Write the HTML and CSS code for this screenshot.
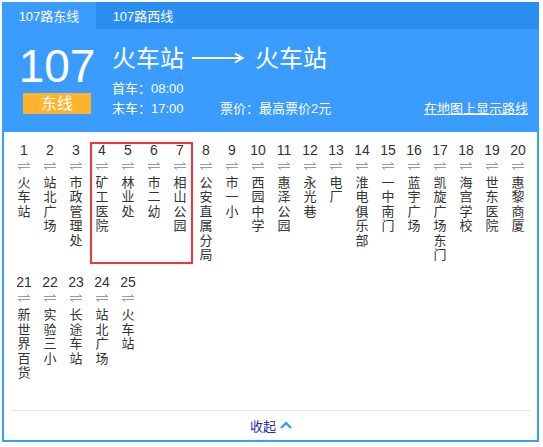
FILE: index.html
```html
<!DOCTYPE html>
<html lang="zh-CN">
<head>
<meta charset="utf-8">
<title>107路</title>
<link rel="stylesheet" href="styles.css">
</head>
<body>
<div class="widget">
  <div class="tabs">
    <div class="tab active">107路东线</div>
    <div class="tab">107路西线</div>
  </div>
  <div class="panel">
    <div class="header">
      <div class="route-left">
        <div class="route-no">107</div>
        <div class="badge">东线</div>
      </div>
      <div class="info">
        <div class="title">
          <span>火车站</span>
          <svg class="long-arrow" width="52" height="12" viewBox="0 0 52 12"><path d="M0 6H50M43 1.5L50.5 6L43 10.5" fill="none" stroke="#fff" stroke-width="2"/></svg>
          <span>火车站</span>
        </div>
        <div class="line">首车：08:00</div>
        <div class="line row3">
          <span class="t-end">末车：17:00</span>
          <span>票价：最高票价2元</span>
          <a class="map-link">在地图上显示路线</a>
        </div>
      </div>
    </div>
    <div class="list">
      <div class="stop"><div class="num">1</div><svg class="dir" width="12" height="8" viewBox="0 0 12 8"><path d="M0 2.5H12M11.5 2.5L8.5 0M0 5.5H12M0.5 5.5L3.5 8" fill="none" stroke="#9a9a9a" stroke-width="1"/></svg><div class="name">火车站</div></div>
      <div class="stop"><div class="num">2</div><svg class="dir" width="12" height="8" viewBox="0 0 12 8"><path d="M0 2.5H12M11.5 2.5L8.5 0M0 5.5H12M0.5 5.5L3.5 8" fill="none" stroke="#9a9a9a" stroke-width="1"/></svg><div class="name">站北广场</div></div>
      <div class="stop"><div class="num">3</div><svg class="dir" width="12" height="8" viewBox="0 0 12 8"><path d="M0 2.5H12M11.5 2.5L8.5 0M0 5.5H12M0.5 5.5L3.5 8" fill="none" stroke="#9a9a9a" stroke-width="1"/></svg><div class="name">市政管理处</div></div>
      <div class="stop"><div class="num">4</div><svg class="dir" width="12" height="8" viewBox="0 0 12 8"><path d="M0 2.5H12M11.5 2.5L8.5 0M0 5.5H12M0.5 5.5L3.5 8" fill="none" stroke="#9a9a9a" stroke-width="1"/></svg><div class="name">矿工医院</div></div>
      <div class="stop"><div class="num">5</div><svg class="dir" width="12" height="8" viewBox="0 0 12 8"><path d="M0 2.5H12M11.5 2.5L8.5 0M0 5.5H12M0.5 5.5L3.5 8" fill="none" stroke="#9a9a9a" stroke-width="1"/></svg><div class="name">林业处</div></div>
      <div class="stop"><div class="num">6</div><svg class="dir" width="12" height="8" viewBox="0 0 12 8"><path d="M0 2.5H12M11.5 2.5L8.5 0M0 5.5H12M0.5 5.5L3.5 8" fill="none" stroke="#9a9a9a" stroke-width="1"/></svg><div class="name">市二幼</div></div>
      <div class="stop"><div class="num">7</div><svg class="dir" width="12" height="8" viewBox="0 0 12 8"><path d="M0 2.5H12M11.5 2.5L8.5 0M0 5.5H12M0.5 5.5L3.5 8" fill="none" stroke="#9a9a9a" stroke-width="1"/></svg><div class="name">相山公园</div></div>
      <div class="stop"><div class="num">8</div><svg class="dir" width="12" height="8" viewBox="0 0 12 8"><path d="M0 2.5H12M11.5 2.5L8.5 0M0 5.5H12M0.5 5.5L3.5 8" fill="none" stroke="#9a9a9a" stroke-width="1"/></svg><div class="name">公安直属分局</div></div>
      <div class="stop"><div class="num">9</div><svg class="dir" width="12" height="8" viewBox="0 0 12 8"><path d="M0 2.5H12M11.5 2.5L8.5 0M0 5.5H12M0.5 5.5L3.5 8" fill="none" stroke="#9a9a9a" stroke-width="1"/></svg><div class="name">市一小</div></div>
      <div class="stop"><div class="num">10</div><svg class="dir" width="12" height="8" viewBox="0 0 12 8"><path d="M0 2.5H12M11.5 2.5L8.5 0M0 5.5H12M0.5 5.5L3.5 8" fill="none" stroke="#9a9a9a" stroke-width="1"/></svg><div class="name">西园中学</div></div>
      <div class="stop"><div class="num">11</div><svg class="dir" width="12" height="8" viewBox="0 0 12 8"><path d="M0 2.5H12M11.5 2.5L8.5 0M0 5.5H12M0.5 5.5L3.5 8" fill="none" stroke="#9a9a9a" stroke-width="1"/></svg><div class="name">惠泽公园</div></div>
      <div class="stop"><div class="num">12</div><svg class="dir" width="12" height="8" viewBox="0 0 12 8"><path d="M0 2.5H12M11.5 2.5L8.5 0M0 5.5H12M0.5 5.5L3.5 8" fill="none" stroke="#9a9a9a" stroke-width="1"/></svg><div class="name">永光巷</div></div>
      <div class="stop"><div class="num">13</div><svg class="dir" width="12" height="8" viewBox="0 0 12 8"><path d="M0 2.5H12M11.5 2.5L8.5 0M0 5.5H12M0.5 5.5L3.5 8" fill="none" stroke="#9a9a9a" stroke-width="1"/></svg><div class="name">电厂</div></div>
      <div class="stop"><div class="num">14</div><svg class="dir" width="12" height="8" viewBox="0 0 12 8"><path d="M0 2.5H12M11.5 2.5L8.5 0M0 5.5H12M0.5 5.5L3.5 8" fill="none" stroke="#9a9a9a" stroke-width="1"/></svg><div class="name">淮电俱乐部</div></div>
      <div class="stop"><div class="num">15</div><svg class="dir" width="12" height="8" viewBox="0 0 12 8"><path d="M0 2.5H12M11.5 2.5L8.5 0M0 5.5H12M0.5 5.5L3.5 8" fill="none" stroke="#9a9a9a" stroke-width="1"/></svg><div class="name">一中南门</div></div>
      <div class="stop"><div class="num">16</div><svg class="dir" width="12" height="8" viewBox="0 0 12 8"><path d="M0 2.5H12M11.5 2.5L8.5 0M0 5.5H12M0.5 5.5L3.5 8" fill="none" stroke="#9a9a9a" stroke-width="1"/></svg><div class="name">蓝宇广场</div></div>
      <div class="stop"><div class="num">17</div><svg class="dir" width="12" height="8" viewBox="0 0 12 8"><path d="M0 2.5H12M11.5 2.5L8.5 0M0 5.5H12M0.5 5.5L3.5 8" fill="none" stroke="#9a9a9a" stroke-width="1"/></svg><div class="name">凯旋广场东门</div></div>
      <div class="stop"><div class="num">18</div><svg class="dir" width="12" height="8" viewBox="0 0 12 8"><path d="M0 2.5H12M11.5 2.5L8.5 0M0 5.5H12M0.5 5.5L3.5 8" fill="none" stroke="#9a9a9a" stroke-width="1"/></svg><div class="name">海宫学校</div></div>
      <div class="stop"><div class="num">19</div><svg class="dir" width="12" height="8" viewBox="0 0 12 8"><path d="M0 2.5H12M11.5 2.5L8.5 0M0 5.5H12M0.5 5.5L3.5 8" fill="none" stroke="#9a9a9a" stroke-width="1"/></svg><div class="name">世东医院</div></div>
      <div class="stop"><div class="num">20</div><svg class="dir" width="12" height="8" viewBox="0 0 12 8"><path d="M0 2.5H12M11.5 2.5L8.5 0M0 5.5H12M0.5 5.5L3.5 8" fill="none" stroke="#9a9a9a" stroke-width="1"/></svg><div class="name">惠黎商厦</div></div>
      <div class="stop"><div class="num">21</div><svg class="dir" width="12" height="8" viewBox="0 0 12 8"><path d="M0 2.5H12M11.5 2.5L8.5 0M0 5.5H12M0.5 5.5L3.5 8" fill="none" stroke="#9a9a9a" stroke-width="1"/></svg><div class="name">新世界百货</div></div>
      <div class="stop"><div class="num">22</div><svg class="dir" width="12" height="8" viewBox="0 0 12 8"><path d="M0 2.5H12M11.5 2.5L8.5 0M0 5.5H12M0.5 5.5L3.5 8" fill="none" stroke="#9a9a9a" stroke-width="1"/></svg><div class="name">实验三小</div></div>
      <div class="stop"><div class="num">23</div><svg class="dir" width="12" height="8" viewBox="0 0 12 8"><path d="M0 2.5H12M11.5 2.5L8.5 0M0 5.5H12M0.5 5.5L3.5 8" fill="none" stroke="#9a9a9a" stroke-width="1"/></svg><div class="name">长途车站</div></div>
      <div class="stop"><div class="num">24</div><svg class="dir" width="12" height="8" viewBox="0 0 12 8"><path d="M0 2.5H12M11.5 2.5L8.5 0M0 5.5H12M0.5 5.5L3.5 8" fill="none" stroke="#9a9a9a" stroke-width="1"/></svg><div class="name">站北广场</div></div>
      <div class="stop"><div class="num">25</div><svg class="dir" width="12" height="8" viewBox="0 0 12 8"><path d="M0 2.5H12M11.5 2.5L8.5 0M0 5.5H12M0.5 5.5L3.5 8" fill="none" stroke="#9a9a9a" stroke-width="1"/></svg><div class="name">火车站</div></div>
      <div class="highlight"></div>
    </div>
    <div class="footer">
      <span>收起</span>
      <svg width="12" height="8" viewBox="0 0 12 8"><path d="M1 7L6 2L11 7" fill="none" stroke="#3a9cfe" stroke-width="2.4"/></svg>
    </div>
  </div>
</div>
</body>
</html>
```

FILE: styles.css
```css
body {
  margin: 0;
  background: #fff;
  font-family: "Liberation Sans", "Noto Sans CJK SC", sans-serif;
}

.widget {
  margin: 2px 0 0 2px;
  width: 537px;
}

.tabs {
  display: flex;
  height: 27px;
  background: #2a8ef1;
}

.tab {
  width: 94px;
  height: 27px;
  box-sizing: border-box;
  padding-top: 2px;
  line-height: 25px;
  text-align: center;
  color: #fff;
  font-size: 13px;
}

.tab.active {
  background: #3a9cfe;
}

.panel {
  border: 2px solid #3a9cfe;
  border-top: 0;
}

.header {
  display: flex;
  height: 103px;
  box-sizing: border-box;
  padding: 14px 9px 0 8px;
  background: #3a9cfe;
  color: #fff;
}

.route-left {
  width: 90px;
  display: flex;
  flex-direction: column;
  align-items: center;
}

.route-no {
  font-size: 46px;
  line-height: 46px;
}

.badge {
  margin-top: 4px;
  width: 68px;
  height: 21px;
  background: #ffb22b;
  font-size: 16px;
  line-height: 21px;
  text-align: center;
}

.info {
  flex: 1;
  margin-left: 10px;
}

.title {
  display: flex;
  align-items: flex-start;
  font-size: 24px;
  line-height: 32px;
  height: 32px;
}

.long-arrow {
  margin: 9px 11px 0 8px;
}

.line {
  font-family: "Liberation Sans", "Noto Sans CJK TC", sans-serif;
  font-size: 13px;
  line-height: 20px;
}

.title + .line {
  margin-top: 4px;
}

.row3 {
  display: flex;
}

.t-end {
  width: 108px;
}

.map-link {
  margin-left: auto;
  color: #fff;
  text-decoration: underline;
}

.list {
  position: relative;
  height: 278px;
  box-sizing: border-box;
  padding: 10px 6px 0 7px;
  display: flex;
  flex-wrap: wrap;
  align-content: flex-start;
  row-gap: 12px;
}

.stop {
  width: 26px;
  display: flex;
  flex-direction: column;
  align-items: center;
  color: #333;
}

.num {
  font-size: 14px;
  line-height: 16px;
}

.dir {
  display: block;
  margin: 4px 0 6px;
}

.name {
  width: 13px;
  font-size: 13px;
  line-height: 14.4px;
  word-break: break-all;
}

.highlight {
  position: absolute;
  left: 86px;
  top: 10px;
  width: 103px;
  height: 122px;
  box-sizing: border-box;
  border: 2px solid #f23434;
  pointer-events: none;
}

.footer {
  margin: 0 6px 0 7px;
  height: 30px;
  box-sizing: border-box;
  padding-bottom: 1px;
  border-top: 1px solid #e8e8e8;
  display: flex;
  justify-content: center;
  align-items: center;
  gap: 4px;
  color: #2a2aa8;
  font-size: 13px;
}
```
